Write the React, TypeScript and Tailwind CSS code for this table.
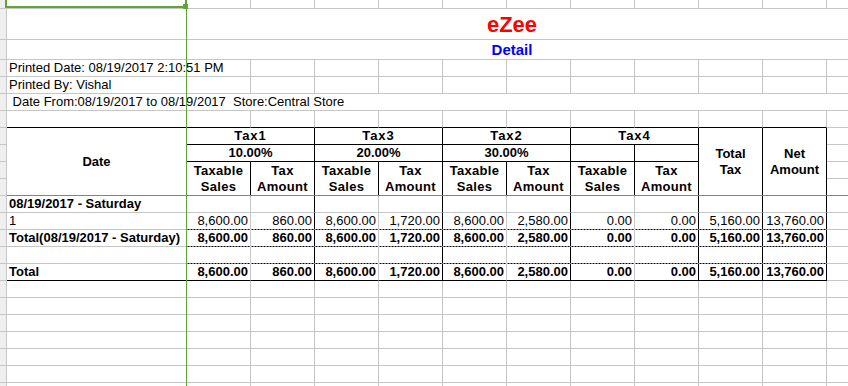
import React from "react";

type Group = { name: string; pct: string };

const groups: Group[] = [
  { name: "Tax1", pct: "10.00%" },
  { name: "Tax3", pct: "20.00%" },
  { name: "Tax2", pct: "30.00%" },
  { name: "Tax4", pct: "" },
];

const amounts = ["8,600.00", "860.00", "8,600.00", "1,720.00", "8,600.00", "2,580.00", "0.00", "0.00", "5,160.00", "13,760.00"];

// right edge of columns B..K inside the report: black between groups, grey inside a group
const blackRight = [false, true, false, true, false, true, false, true, true, true];

type DataRow = { label: string; bold: boolean; values: boolean; bottom: "grid" | "dash" | "solid" };

const dataRows: DataRow[] = [
  { label: "08/19/2017 - Saturday", bold: true, values: false, bottom: "grid" },
  { label: "1", bold: false, values: true, bottom: "dash" },
  { label: "Total(08/19/2017 - Saturday)", bold: true, values: true, bottom: "dash" },
  { label: "", bold: false, values: false, bottom: "dash" },
  { label: "Total", bold: true, values: true, bottom: "solid" },
];

const Strip = ({ className = "" }: { className?: string }) => (
  <div className={`w-[7px] shrink-0 border-r border-b border-[#c6c6c6] bg-[#efefef] ${className}`} />
);

const Blank = ({ n }: { n: number }) => (
  <>
    {Array.from({ length: n }).map((_, i) => (
      <div key={i} className="w-[64px] shrink-0 border-r border-b border-[#c6c6c6]" />
    ))}
  </>
);

const Row = ({ className, children }: { className: string; children?: React.ReactNode }) => (
  <div className={`flex ${className}`}>{children}</div>
);

const App: React.FC = () => {
  return (
    <div className="relative w-[848px] h-[386px] overflow-hidden bg-white text-black font-['Liberation_Sans',Arial,sans-serif] text-[13px] leading-[16px]">
      {/* top of sheet */}
      <Row className="h-[9px]">
        <Strip />
        <div className="w-[180px] shrink-0 border-r border-b border-[#c6c6c6]" />
        <Blank n={11} />
      </Row>
      <Row className="h-[31px]">
        <Strip />
        <div className="w-[1010px] shrink-0 border-b border-[#c6c6c6] flex items-end justify-center pb-[2px] text-[22px] leading-[24px] font-bold text-[#ff0000]">
          eZee
        </div>
      </Row>
      <Row className="h-[20px]">
        <Strip />
        <div className="w-[1010px] shrink-0 border-b border-[#c6c6c6] text-center text-[15px] leading-[19px] font-bold text-[#0000ff]">
          Detail
        </div>
      </Row>
      <Row className="h-[17px]">
        <Strip />
        <div className="w-[180px] shrink-0 border-b border-[#c6c6c6] pl-[2px] whitespace-nowrap">
          Printed Date: 08/19/2017 2:10:51 PM
        </div>
        <Blank n={11} />
      </Row>
      <Row className="h-[17px]">
        <Strip />
        <div className="w-[180px] shrink-0 border-b border-[#c6c6c6] pl-[2px] whitespace-nowrap">Printed By: Vishal</div>
        <Blank n={11} />
      </Row>
      <Row className="h-[17px]">
        <Strip />
        <div className="w-[1010px] shrink-0 border-b border-[#c6c6c6] pl-[2px] whitespace-pre">
          {" Date From:08/19/2017 to 08/19/2017  Store:Central Store"}
        </div>
      </Row>
      <Row className="h-[17px]">
        <Strip />
        <div className="w-[180px] shrink-0 border-r border-b border-r-[#c6c6c6] border-b-black" />
        {Array.from({ length: 10 }).map((_, i) => (
          <div key={i} className="w-[64px] shrink-0 border-r border-b border-r-[#c6c6c6] border-b-black" />
        ))}
        <Blank n={1} />
      </Row>

      {/* report header */}
      <Row className="h-[68px] font-bold">
        <div className="flex flex-col">
          <Strip className="h-[17px]" />
          <Strip className="h-[17px]" />
          <Strip className="h-[17px]" />
          <Strip className="h-[17px]" />
        </div>
        <div className="w-[180px] shrink-0 border-r border-b border-black flex items-center justify-center">Date</div>
        {groups.map((g) => (
          <div key={g.name} className="w-[128px] shrink-0 flex flex-col">
            <div className="h-[17px] border-r border-b border-black text-center tracking-[1px]">{g.name}</div>
            {g.pct ? (
              <div className="h-[17px] border-r border-b border-black text-center">{g.pct}</div>
            ) : (
              <div className="h-[17px] flex">
                <div className="w-[64px] border-r border-b border-black" />
                <div className="w-[64px] border-r border-b border-black" />
              </div>
            )}
            <div className="h-[34px] flex">
              <div className="w-[64px] border-r border-b border-black flex items-center justify-center text-center tracking-[0.3px]">
                Taxable
                <br />
                Sales
              </div>
              <div className="w-[64px] border-r border-b border-black flex items-center justify-center text-center tracking-[0.3px]">
                Tax
                <br />
                Amount
              </div>
            </div>
          </div>
        ))}
        <div className="w-[64px] shrink-0 border-r border-b border-black flex items-center justify-center text-center">
          Total
          <br />
          Tax
        </div>
        <div className="w-[64px] shrink-0 border-r border-b border-black flex items-center justify-center text-center">
          Net
          <br />
          Amount
        </div>
        <div className="w-[64px] shrink-0 flex flex-col">
          <div className="h-[17px] border-r border-b border-[#c6c6c6]" />
          <div className="h-[17px] border-r border-b border-[#c6c6c6]" />
          <div className="h-[17px] border-r border-b border-[#c6c6c6]" />
          <div className="h-[17px] border-r border-b border-[#c6c6c6]" />
        </div>
      </Row>

      {/* report body */}
      {dataRows.map((r, ri) => (
        <Row key={ri} className={`h-[17px] ${r.bold ? "font-bold" : ""}`}>
          <Strip />
          <div
            className={`w-[180px] shrink-0 border-r border-b border-r-[#c6c6c6] pl-[2px] whitespace-nowrap ${
              r.bottom === "solid" ? "border-b-black" : "border-b-[#c6c6c6]"
            }`}
          >
            {r.label}
          </div>
          {amounts.map((v, i) => (
            <div
              key={i}
              className={`w-[64px] shrink-0 border-r border-b text-right pr-[2px] ${blackRight[i] ? "border-r-black" : "border-r-[#c6c6c6]"} ${
                r.bottom === "grid"
                  ? "border-b-[#c6c6c6]"
                  : r.bottom === "dash"
                  ? "border-b-transparent bg-[linear-gradient(90deg,#000_2px,transparent_2px)] bg-[length:3px_1px] bg-bottom bg-repeat-x bg-origin-border"
                  : "border-b-black"
              }`}
            >
              {r.values ? v : ""}
            </div>
          ))}
          <Blank n={1} />
        </Row>
      ))}

      {/* empty sheet below */}
      {Array.from({ length: 7 }).map((_, i) => (
        <Row key={i} className="h-[17px]">
          <Strip />
          <div className="w-[180px] shrink-0 border-r border-b border-[#c6c6c6]" />
          <Blank n={11} />
        </Row>
      ))}

      {/* freeze panes and active cell */}
      <div className="absolute left-[186px] top-0 h-full w-px bg-[#5ea535]" />
      <div className="absolute left-[7px] right-0 top-[195px] h-px bg-[#5ea535]" />
      <div className="absolute left-[5px] top-[-6px] w-[182px] h-[14px] border-2 border-[#5ea535]" />
      <div className="absolute left-[183px] top-[4px] w-[5px] h-[5px] bg-[#5ea535]" />
    </div>
  );
};

export default App;
